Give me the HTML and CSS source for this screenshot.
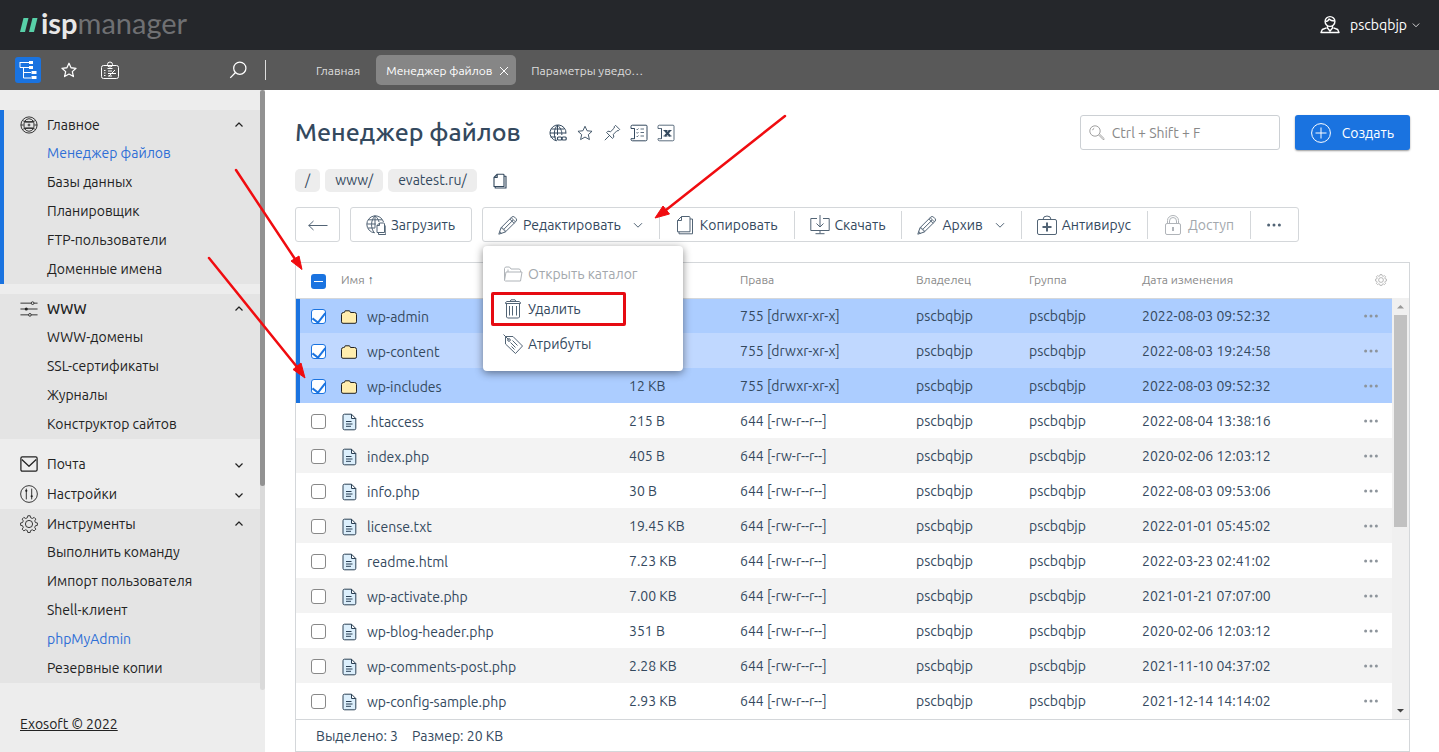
FILE: index.html
```html
<!DOCTYPE html>
<html lang="ru">
<head>
<meta charset="utf-8">
<title>ispmanager</title>
<link rel="stylesheet" href="styles.css">
</head>
<body>
<svg class="sprite" aria-hidden="true">
  <symbol id="star" viewBox="0 0 20 20"><path d="M10 2.500l2.300 5 5.500.6-4.100 3.700 1.200 5.500-4.900-2.800-4.900 2.800 1.200-5.500-4.100-3.700 5.500-.6z"/></symbol>
  <symbol id="lens" viewBox="0 0 20 20"><circle cx="12" cy="8" r="6.800"/><path d="M7.200 12.800L1.400 18.800"/></symbol>
  <symbol id="up" viewBox="0 0 10 10"><path d="M1.500 6.500L5 3 8.500 6.500"/></symbol>
  <symbol id="down" viewBox="0 0 10 10"><path d="M1 3.200L5 7.200 9 3.200"/></symbol>
  <symbol id="down-small" viewBox="0 0 10 10"><path d="M1.500 4.500L5 8 8.500 4.500"/></symbol>
  <symbol id="dots" viewBox="0 0 16 6"><circle cx="2.600" cy="3" r="1.500"/><circle cx="8" cy="3" r="1.500"/><circle cx="13.400" cy="3" r="1.500"/></symbol>
  <symbol id="gear" viewBox="0 0 20 20"><circle cx="10" cy="10" r="4"/><path d="M8.600 1.200h2.800l.5 2.300 2 .9 2.100-1.300 2 2-1.300 2.100.8 1.900 2.300.5v2.800l-2.300.5-.8 1.900 1.300 2.100-2 2-2.100-1.300-2 .9-.5 2.300H8.600l-.5-2.300-2-.9L4 18.900l-2-2 1.300-2.100-.8-1.900-2.300-.5V9.600l2.300-.5.8-1.900L2 5.100l2-2 2.100 1.300 2-.9z" transform="translate(.5 -.3) scale(.95)"/></symbol>
  <symbol id="copy" viewBox="0 0 20 20"><path d="M6.500 1.500H14a1 1 0 0 1 1 1v14.300H2.500V5.500zM6.500 1.500v4h-4M4 16.800v2h13.500V4H15"/></symbol>
  <symbol id="pencil" viewBox="0 0 20 20"><path d="M.8 19.200L3 12.800 13.600 2.200a2.200 2.200 0 0 1 3.100 0l1.200 1.200a2.200 2.200 0 0 1 0 3.100L7.300 17zM3 12.800l1.900.4.300 1.500 1.700.4.400 1.900M11.800 4l4.300 4.300M13.200 2.700l4.200 4.200M6.100 14L15 5.200M1.700 16.500l1.900 1.900"/></symbol>
  <symbol id="folder" viewBox="0 0 18 16"><path d="M1.500 5.500a2 2 0 0 1 2-2h.8l.9-1.700h4.300l1 1.700h4a2 2 0 0 1 2 2v7.300a1.500 1.500 0 0 1-1.500 1.500H3a1.500 1.500 0 0 1-1.500-1.500z"/></symbol>
  <symbol id="file" viewBox="0 0 16 18"><path d="M3.500 1.200h7l4.300 4.300v9.800a1.500 1.500 0 0 1-1.500 1.500H3.500A1.500 1.500 0 0 1 2 15.300V2.700a1.500 1.500 0 0 1 1.500-1.500zM10.500 1.200v4.300h4.300M5 8.500h5.500M5 11h6.500M5 13.300h5"/></symbol>
</svg>

<header class="topbar">
  <a class="logo" href="#"><svg class="logo-mark" viewBox="0 0 18 16"><path d="M3.500 1h5L5 15H0zM12.500 1h5L14 15H9z"/></svg><span class="logo-text"><b>isp</b>manager</span></a>
  <button class="user" type="button">
    <svg class="i20 bold" viewBox="0 0 20 20"><circle cx="10" cy="6.500" r="4.900"/><path d="M5.500 6.500c2 0 3-1 3.500-2.500 1.500 1.500 3.500 2 5.500 2M7.500 11v2l2.500 3 2.500-3v-2M6.500 12.800L2.300 14.500 1 17.500h18l-1.300-3-4.200-1.700"/></svg>
    <span>pscbqbjp</span><svg class="i8"><use href="#down"/></svg>
  </button>
</header>

<nav class="tabbar">
  <div class="tools">
    <button class="tool current" type="button" aria-label="Меню"><svg class="i20" viewBox="0 0 20 20"><path d="M2 2v5.500h9M2 2.500h9M5.500 7.500V18H13M5.500 12.500H13"/><path class="solid" d="M11 1h4v3h-4zM11 6h4v3h-4zM13.500 11h5v3h-5zM13.500 16h5v3h-5z"/></svg></button>
    <button class="tool" type="button" aria-label="Избранное"><svg class="i18 bold"><use href="#star"/></svg></button>
    <button class="tool" type="button" aria-label="Сводка"><svg class="i20" viewBox="0 0 20 20"><rect x="1.500" y="5.500" width="17" height="13" rx="2"/><circle cx="10" cy="4.500" r="2.500"/><path d="M7.500 8.500h5M4 10.500h1.500M4 13h1.500M4 15.500h1.500M8 11h4M8 13.500h8M8 16h4M9 16l6-6"/></svg></button>
    <button class="tool find" type="button" aria-label="Поиск"><svg class="i18 bold"><use href="#lens"/></svg></button>
  </div>
  <div class="tabs">
    <a class="tab" href="#">Главная</a>
    <a class="tab active" href="#">Менеджер файлов <svg class="i10" viewBox="0 0 10 10"><path d="M1 1l8 8M9 1L1 9"/></svg></a>
    <a class="tab" href="#">Параметры уведо…</a>
  </div>
</nav>

<div class="layout">
  <aside class="sidebar">
    <nav class="menu">
      <section class="group open here">
        <button class="group-head" type="button"><svg class="i18" viewBox="0 0 20 20"><circle cx="10" cy="10" r="9"/><path d="M5 6.500a5.500 6 0 0 1 10 0M5 13.500a5.500 6 0 0 0 10 0M1 10h3M16 10h3M3.500 5.500c4 1.200 9 1.200 13 0M3.500 14.500c4-1.200 9-1.200 13 0"/><rect x="4.500" y="6.800" width="11" height="6.500" rx="1"/><path d="M8.500 10h3M10 8.500v3"/></svg><span>Главное</span><svg class="i10"><use href="#up"/></svg></button>
        <a class="chosen" href="#">Менеджер файлов</a><a href="#">Базы данных</a><a href="#">Планировщик</a><a href="#">FTP-пользователи</a><a href="#">Доменные имена</a>
      </section>
      <section class="group open">
        <button class="group-head strong" type="button"><svg class="i18" viewBox="0 0 20 20"><path d="M.5 3.500h12M15.500 3.500h4M.5 10h19M.5 16.500h9M12.500 16.500h7"/><circle cx="14" cy="3.500" r="1.500"/><circle class="solid" cx="7" cy="10" r="1.700"/><circle cx="11" cy="16.500" r="1.500"/></svg><span>WWW</span><svg class="i10"><use href="#up"/></svg></button>
        <a href="#">WWW-домены</a><a href="#">SSL-сертификаты</a><a href="#">Журналы</a><a href="#">Конструктор сайтов</a>
      </section>
      <section class="group">
        <button class="group-head" type="button"><svg class="i18 bold" viewBox="0 0 20 20"><rect x="1" y="2" width="18" height="16" rx="1.500"/><path d="M2 5l8 7.500L18 5"/></svg><span>Почта</span><svg class="i10"><use href="#down-small"/></svg></button>
      </section>
      <section class="group">
        <button class="group-head" type="button"><svg class="i18" viewBox="0 0 20 20"><circle cx="10" cy="10" r="9.300"/><path d="M7 4v12M13 4v12"/><circle class="solid" cx="7" cy="6.500" r="1.200"/><circle class="solid" cx="13" cy="12.500" r="1.200"/></svg><span>Настройки</span><svg class="i10"><use href="#down-small"/></svg></button>
      </section>
      <section class="group open">
        <button class="group-head" type="button"><svg class="i18"><use href="#gear"/></svg><span>Инструменты</span><svg class="i10"><use href="#up"/></svg></button>
        <a href="#">Выполнить команду</a><a href="#">Импорт пользователя</a><a href="#">Shell-клиент</a><a class="chosen" href="#">phpMyAdmin</a><a href="#">Резервные копии</a>
      </section>
    </nav>
    <div class="side-scroll"><span></span></div>
    <a class="copyright" href="#">Exosoft © 2022</a>
  </aside>

  <main class="content">
    <div class="title-row">
      <h1>Менеджер файлов</h1>
      <div class="title-icons">
        <svg class="i18" viewBox="0 0 18 18"><path d="M7.500 16.800A8 8 0 1 1 17 9.500M7.500 16.800C4.500 13 4.500 5 8.500 1 12.500 5 13 8 12.800 11M8.500 1v10M.8 9H17M2.500 5h12.500M1.500 13H7"/><rect class="link" x="8.500" y="13" width="4.200" height="3" rx="1"/><rect class="link" x="13" y="13" width="4.200" height="3" rx="1"/></svg>
        <svg class="i18"><use href="#star"/></svg>
        <svg class="i18" viewBox="0 0 20 20"><path d="M2 18l5.500-5.500M4 9.500l6.500 6.500 1.500-1.500-.5-3 4-4h1.500L18.500 6 14 1.500 12.500 3v1.500l-4 4-3-.5z"/></svg>
        <svg class="i18" viewBox="0 0 18 18"><path d="M4.500 4.500H1V2.500a1.300 1.300 0 0 1 1.300-1.300H16a1 1 0 0 1 1 1v13.300a1.300 1.300 0 0 1-1.300 1.300H2.500A1.500 1.500 0 0 1 1 15.500v-.8h3.500zM4.500 4.500v10.200"/><path class="thin" d="M6.500 5l.8.8L8.500 4.500M6.500 8.500l.8.8L8.500 8M6.500 12l.8.8 1.200-1.300M10.500 5H14M10.500 8.500H14M10.500 12H14"/></svg>
        <svg class="i18" viewBox="0 0 18 18"><path class="thin" d="M4.500 4.500H1V2.500a1.300 1.300 0 0 1 1.300-1.300H16a1 1 0 0 1 1 1v13.300a1.300 1.300 0 0 1-1.300 1.300H2.500A1.500 1.500 0 0 1 1 15.500v-.8h3.500zM4.500 4.500v10.200"/><path class="thick" d="M8 6.500l5 5.500M13 6.500L8 12"/><path d="M6.500 6.500h4M11.500 6.500h3M6.500 12h4M11.500 12h3"/></svg>
      </div>
      <label class="search"><svg class="i16" viewBox="0 0 20 20"><circle cx="7.500" cy="7.500" r="6.500"/><path d="M4.500 6.500a3.500 3.500 0 0 1 2-2.500M12 12.500l6 6 1.200-1.200-6-6"/></svg><input type="search" placeholder="Ctrl + Shift + F" aria-label="Поиск"></label>
      <button class="create" type="button"><svg class="i20" viewBox="0 0 20 20"><circle cx="10" cy="10" r="9.400"/><path d="M10 4.500v11M4.500 10h11"/></svg>Создать</button>
    </div>

    <nav class="crumbs"><a href="#">/</a><a href="#">www/</a><a href="#">evatest.ru/</a><svg class="i16 bold"><use href="#copy"/></svg></nav>

    <div class="toolbar">
      <button class="box back" type="button" aria-label="Назад"><svg class="i20" viewBox="0 0 20 20"><path d="M.5 10.500h19M5.500 6L.8 10.500 5.500 15"/></svg></button>
      <button class="box" type="button"><svg class="i20" viewBox="0 0 20 20"><path d="M8.500 17.800A8.500 8.500 0 1 1 17.500 7M8.500 17.800C4.500 14 4.500 5 9 .8 11.500 3 12.500 5 13 7M9 .8v12M.8 9h9M2.500 4.800h13.500M2 13h7"/><path d="M13.500 8h4a1 1 0 0 1 1 1v8.500h-7.500V10.500zM13.500 8v2.500H11M12.500 17.500v2h7.300V10.500"/></svg>Загрузить</button>
      <div class="box actions">
        <div class="action">
          <button type="button"><svg class="i20"><use href="#pencil"/></svg>Редактировать<svg class="i10 caret"><use href="#down"/></svg></button>
          <div class="dropdown">
            <button type="button" disabled><svg class="i20" viewBox="0 0 20 20"><path d="M1.500 16V4.500l1-1.500h4L8 5h8.500l1 1.500V8M1.500 16.500L3 8h16l-1.500 9H2.500zM5 5.500V8"/></svg>Открыть каталог</button>
            <button class="marked" type="button"><svg class="i20" viewBox="0 0 20 20"><path d="M2.500 4.500h15v-1l-1.500-1H4L2.500 3.500zM7 2.500L8 .8h4l1 1.700M3.500 4.500V18l1 1h11l1-1V4.500M6.500 7v9.500M9.500 7v9.500M13.500 7v9.500"/></svg>Удалить</button>
            <button type="button"><svg class="i20" viewBox="0 0 20 20"><path d="M.5.5l5 5M2.500 2.500h7.500l9.500 9.500-7 7.500L2.500 10zM9.500 6.500l5 5M7.500 8.500l5 5M8.500 12.500l3 3"/><circle cx="6" cy="6" r="1.300"/></svg>Атрибуты</button>
          </div>
        </div>
        <div class="action"><button type="button"><svg class="i20"><use href="#copy"/></svg>Копировать</button></div>
        <div class="action"><button type="button"><svg class="i20" viewBox="0 0 20 20"><path d="M7 3.500H.8v12h18.400v-12H13M10 0v11.500M6.500 8.500l3.500 3.500 3.500-3.500M10 15.500v3M5.500 18.700h9"/></svg>Скачать</button></div>
        <div class="action"><button type="button"><svg class="i20"><use href="#pencil"/></svg>Архив<svg class="i10 caret"><use href="#down"/></svg></button></div>
        <div class="action"><button type="button"><svg class="i20" viewBox="0 0 20 20"><rect x=".5" y="4.500" width="19" height="15" rx="1.500"/><path d="M6 4.500a4 3.500 0 0 1 8 0"/><path class="thick" d="M10 7.500v9M5.500 12h9"/></svg>Антивирус</button></div>
        <div class="action"><button type="button" disabled><svg class="i20" viewBox="0 0 20 20"><rect x="2.500" y="8.500" width="15" height="11" rx="1.500"/><path d="M4.500 8.500V5.500a5.500 5 0 0 1 11 0v3M6.500 8.500V6a3.500 3.500 0 0 1 7 0v2.500"/><path class="thick" d="M10 12v4"/></svg>Доступ</button></div>
        <div class="action"><button type="button" aria-label="Ещё"><svg class="dots"><use href="#dots"/></svg></button></div>
      </div>
    </div>

    <section class="panel">
      <div class="grid">
        <table>
          <colgroup><col class="c-check"><col class="c-icon"><col class="c-name"><col class="c-size"><col class="c-mode"><col class="c-own"><col class="c-own"><col><col class="c-more"></colgroup>
          <thead><tr><th><button class="mixed" type="button" aria-label="Снять выделение"></button></th><th colspan="2">Имя <b>↑</b></th><th></th><th>Права</th><th>Владелец</th><th>Группа</th><th>Дата изменения</th><th><svg class="i12"><use href="#gear"/></svg></th></tr></thead>
          <tbody>
            <tr class="sel"><td><input type="checkbox" checked aria-label="wp-admin"></td><td><svg class="folder"><use href="#folder"/></svg></td><td>wp-admin</td><td></td><td>755 [drwxr-xr-x]</td><td>pscbqbjp</td><td>pscbqbjp</td><td>2022-08-03 09:52:32</td><td><svg class="dots"><use href="#dots"/></svg></td></tr>
            <tr class="sel"><td><input type="checkbox" checked aria-label="wp-content"></td><td><svg class="folder"><use href="#folder"/></svg></td><td>wp-content</td><td></td><td>755 [drwxr-xr-x]</td><td>pscbqbjp</td><td>pscbqbjp</td><td>2022-08-03 19:24:58</td><td><svg class="dots"><use href="#dots"/></svg></td></tr>
            <tr class="sel"><td><input type="checkbox" checked aria-label="wp-includes"></td><td><svg class="folder"><use href="#folder"/></svg></td><td>wp-includes</td><td>12 KB</td><td>755 [drwxr-xr-x]</td><td>pscbqbjp</td><td>pscbqbjp</td><td>2022-08-03 09:52:32</td><td><svg class="dots"><use href="#dots"/></svg></td></tr>
            <tr><td><input type="checkbox" aria-label=".htaccess"></td><td><svg class="file"><use href="#file"/></svg></td><td>.htaccess</td><td>215 B</td><td>644 [-rw-r--r--]</td><td>pscbqbjp</td><td>pscbqbjp</td><td>2022-08-04 13:38:16</td><td><svg class="dots"><use href="#dots"/></svg></td></tr>
            <tr><td><input type="checkbox" aria-label="index.php"></td><td><svg class="file"><use href="#file"/></svg></td><td>index.php</td><td>405 B</td><td>644 [-rw-r--r--]</td><td>pscbqbjp</td><td>pscbqbjp</td><td>2020-02-06 12:03:12</td><td><svg class="dots"><use href="#dots"/></svg></td></tr>
            <tr><td><input type="checkbox" aria-label="info.php"></td><td><svg class="file"><use href="#file"/></svg></td><td>info.php</td><td>30 B</td><td>644 [-rw-r--r--]</td><td>pscbqbjp</td><td>pscbqbjp</td><td>2022-08-03 09:53:06</td><td><svg class="dots"><use href="#dots"/></svg></td></tr>
            <tr><td><input type="checkbox" aria-label="license.txt"></td><td><svg class="file"><use href="#file"/></svg></td><td>license.txt</td><td>19.45 KB</td><td>644 [-rw-r--r--]</td><td>pscbqbjp</td><td>pscbqbjp</td><td>2022-01-01 05:45:02</td><td><svg class="dots"><use href="#dots"/></svg></td></tr>
            <tr><td><input type="checkbox" aria-label="readme.html"></td><td><svg class="file"><use href="#file"/></svg></td><td>readme.html</td><td>7.23 KB</td><td>644 [-rw-r--r--]</td><td>pscbqbjp</td><td>pscbqbjp</td><td>2022-03-23 02:41:02</td><td><svg class="dots"><use href="#dots"/></svg></td></tr>
            <tr><td><input type="checkbox" aria-label="wp-activate.php"></td><td><svg class="file"><use href="#file"/></svg></td><td>wp-activate.php</td><td>7.00 KB</td><td>644 [-rw-r--r--]</td><td>pscbqbjp</td><td>pscbqbjp</td><td>2021-01-21 07:07:00</td><td><svg class="dots"><use href="#dots"/></svg></td></tr>
            <tr><td><input type="checkbox" aria-label="wp-blog-header.php"></td><td><svg class="file"><use href="#file"/></svg></td><td>wp-blog-header.php</td><td>351 B</td><td>644 [-rw-r--r--]</td><td>pscbqbjp</td><td>pscbqbjp</td><td>2020-02-06 12:03:12</td><td><svg class="dots"><use href="#dots"/></svg></td></tr>
            <tr><td><input type="checkbox" aria-label="wp-comments-post.php"></td><td><svg class="file"><use href="#file"/></svg></td><td>wp-comments-post.php</td><td>2.28 KB</td><td>644 [-rw-r--r--]</td><td>pscbqbjp</td><td>pscbqbjp</td><td>2021-11-10 04:37:02</td><td><svg class="dots"><use href="#dots"/></svg></td></tr>
            <tr><td><input type="checkbox" aria-label="wp-config-sample.php"></td><td><svg class="file"><use href="#file"/></svg></td><td>wp-config-sample.php</td><td>2.93 KB</td><td>644 [-rw-r--r--]</td><td>pscbqbjp</td><td>pscbqbjp</td><td>2021-12-14 14:14:02</td><td><svg class="dots"><use href="#dots"/></svg></td></tr>
          </tbody>
        </table>
        <div class="scroll"><svg viewBox="0 0 17 17"><path d="M5 10.500L8.500 7l3.500 3.500z"/></svg><span></span><svg class="end" viewBox="0 0 17 17"><path d="M5 7l3.500 3.500L12 7z"/></svg></div>
      </div>
      <footer class="summary"><span>Выделено: 3</span><span>Размер: 20 KB</span></footer>
    </section>
  </main>
</div>

<svg class="arrows" width="600" height="300" viewBox="200 100 600 300" aria-hidden="true">
  <path class="shaft" d="M785 116L666 210M236 170L295 259M209 258L297 367"/>
  <path class="head" d="M655 218L663 206 669.500 214zM302 269.500L291 261 299 256zM305 378L293 369.500 301 363z"/>
</svg>
</body>
</html>
```
FILE: styles.css
```css
* { box-sizing: border-box; }
body {
  margin: 0;
  min-height: 100vh;
  display: flex;
  flex-direction: column;
  font: 14px/20px Ubuntu, "Noto Sans", sans-serif;
  color: #34495e;
  background: #fff;
}
a { color: inherit; text-decoration: none; }
button { font: inherit; color: inherit; background: none; border: 0; padding: 0; display: flex; align-items: center; white-space: nowrap; }
svg { flex: none; display: block; fill: none; stroke: currentColor; stroke-width: 1; stroke-linejoin: round; }
.sprite { position: absolute; width: 0; height: 0; }
.bold { stroke-width: 1.4; }
.thick { stroke-width: 2; }
.thin { stroke-width: .8; }
.link { stroke-width: 1.2; }
.solid { fill: currentColor; stroke: none; }
.i8 { width: 8px; height: 8px; }
.i10 { width: 10px; height: 10px; }
.i12 { width: 12px; height: 12px; }
.i16 { width: 16px; height: 16px; }
.i18 { width: 18px; height: 18px; }
.i20 { width: 20px; height: 20px; }
.dots { width: 16px; height: 6px; fill: currentColor; stroke: none; }

.topbar { height: 50px; padding: 0 19px 0 20px; display: flex; align-items: center; justify-content: space-between; background: #25272b; color: #fff; }
.logo { display: flex; align-items: center; gap: 3px; padding-bottom: 4px; font: 29px/34px Lato, sans-serif; color: #6f7073; }
.logo b { color: #e8e8e8; }
.logo-mark { width: 18px; height: 16px; margin-top: 3px; fill: #58d0a8; stroke: none; }
.user { gap: 10px; }
.user .i8 { margin-left: -5px; }

.tabbar { height: 40px; display: flex; align-items: center; background: #595959; color: #fff; }
.tools { width: 266px; height: 20px; padding: 0 18px 0 15px; display: flex; align-items: center; gap: 14px; border-right: 1px solid #ddd; }
.tool { width: 26px; height: 26px; justify-content: center; }
.tool.current { background: #1a73e0; border-radius: 3px; }
.tool + .tool { margin-left: 1px; }
.tool.find { margin-left: auto; width: 18px; }
.tabs { display: flex; padding-left: 40px; font-size: 12px; }
.tab { height: 30px; padding: 2px 10px 0; display: flex; align-items: center; color: #ddd; }
.tab.active { margin: 0 5px 0 6px; gap: 7px; padding-right: 7px; background: #868686; color: #fff; border-radius: 5px; }

.layout { flex: 1; display: flex; }
.sidebar { width: 265px; flex: none; display: grid; grid-template: 600px 1fr / 1fr 5px; background: #ededed; color: #222; }
.menu { padding-top: 20px; }
.group a { display: block; padding-left: 47px; line-height: 29px; }
.group a.chosen { color: #2f6fd6; }
.group-head { width: 100%; height: 30px; padding: 0 16px 0 20px; gap: 9px; }
.group-head span { flex: 1; text-align: left; }
.group-head .i10 { stroke-width: 1.2; }
.open { background: #e4e4e4; margin-bottom: 10px; }
.open .group-head { height: 29px; }
.open .strong { font-weight: 500; }
.here { background: linear-gradient(#1a73e0, #1a73e0) 0 0 / 4px 100% no-repeat #e4e4e4; }
.side-scroll { background: #dadada; border-radius: 0 0 3px 3px; }
.side-scroll span { display: block; height: 66%; background: #929292; border-radius: 3px; }
.copyright { grid-column: 1 / 3; justify-self: start; margin: 24px 0 0 20px; text-decoration: underline; }

.content { flex: 1; min-width: 0; padding: 25px 29px 0 30px; display: flex; flex-direction: column; }
.title-row { display: flex; align-items: center; height: 35px; }
h1 { margin: 0; font-size: 25px; line-height: 35px; font-weight: 500; }
.title-icons { display: flex; gap: 9px; margin: 0 auto 0 28px; }
.search { width: 200px; height: 35px; padding: 0 8px; display: flex; align-items: center; gap: 7px; border: 1px solid #ccd0d4; border-radius: 3px; color: #888; }
.search input { flex: 1; min-width: 0; border: 0; outline: 0; padding: 0; font: inherit; background: none; }
.search input::placeholder { color: #888; }
.create { height: 35px; margin-left: 15px; padding: 0 16px; gap: 11px; background: #1a73e0; color: #fff; border-radius: 3px; box-shadow: 0 1px 2px #0006; }

.crumbs { display: flex; align-items: center; gap: 5px; margin-top: 19px; }
.crumbs a { padding: 0 10px; line-height: 23px; background: #ededed; border-radius: 5px; }
.crumbs svg { margin-left: 10px; }

.toolbar { display: flex; gap: 10px; margin-top: 15px; }
.box { height: 35px; border: 1px solid #d4d7da; border-radius: 3px; }
button.box { padding: 0 16px 0 15px; gap: 5px; }
button.back { padding: 0 11px 0 12px; }
.toolbar svg { opacity: .85; }
.actions { display: flex; align-items: center; }
.action { position: relative; }
.action + .action { border-left: 1px solid #d4d7da; }
.action > button { height: 28px; padding: 0 16px 0 15px; gap: 5px; }
.action .caret { margin-left: 7px; }
button:disabled { color: #a3a8ad; }
.dropdown { position: absolute; z-index: 2; top: 35px; left: 0; width: 200px; padding: 11px 0 9px; background: #fff; border-radius: 4px; box-shadow: 0 2px 8px #0007; }
.dropdown button { position: relative; width: 100%; height: 35px; padding: 0 20px; gap: 5px; }
.marked::after { content: ""; position: absolute; inset: 0 57px 1px 8px; border: 3px solid #e60b12; border-radius: 2px; }

.panel { flex: 1; display: flex; flex-direction: column; margin-top: 20px; border: 1px solid #d4d7da; }
.grid { position: relative; flex: 1; }
table { width: 100%; table-layout: fixed; border-collapse: collapse; }
th, td { padding: 0; height: 35px; text-align: left; font-weight: 400; white-space: nowrap; }
th { color: #8a8a8a; font-size: 12px; border-bottom: 1px solid #d4d7da; }
th b { color: #34495e; font-weight: 400; }
th:first-child, td:nth-child(-n+3) { padding-top: 2px; }
.c-check { width: 45px; }
.c-icon { width: 26px; }
.c-name { width: 262px; }
.c-size { width: 111px; }
.c-mode { width: 176px; }
.c-own { width: 113px; }
.c-more { width: 46px; }
tbody tr:nth-child(odd) { background: #f3f3f3; }
tbody tr:nth-child(even) { background: #fff; }
tbody tr.sel:nth-child(odd) { background: #accdff; }
tbody tr.sel:nth-child(even) { background: #c0d8ff; }
.sel td:first-child { box-shadow: inset 4px 0 #1a73e0; }
th:first-child, td:first-child { padding-left: 15px; }
td:last-child { color: #8d949b; }
th .i12 { margin-left: 12px; }
.folder { width: 18px; height: 16px; margin-left: -1px; fill: #ffedae; stroke: #222; }
.file { width: 16px; height: 18px; fill: #dceffc; stroke: #2b4055; }
.mixed { width: 15px; height: 15px; border-radius: 3px; background: linear-gradient(#fff, #fff) 50% 50% / 9px 1px no-repeat #1a73e0; }
input[type="checkbox"] { appearance: none; display: block; width: 15px; height: 15px; margin: 0; border: 1px solid #888; border-radius: 3px; background: #fff; }
input[type="checkbox"]:checked { display: flex; justify-content: center; align-items: start; border-color: #1a73e0; }
input[type="checkbox"]:checked::after { content: ""; flex: none; width: 6px; height: 11px; border: solid #1a73e0; border-width: 0 2px 2px 0; transform: rotate(38deg); }

.scroll { position: absolute; top: 35px; right: 0; bottom: 0; width: 17px; display: flex; flex-direction: column; background: #f0f0f0; }
.scroll span { width: 13px; margin: 0 2px; height: 212px; background: #c1c1c1; }
.scroll svg { width: 17px; height: 17px; fill: #999; stroke: none; }
.scroll .end { margin-top: auto; fill: #444; }
.summary { height: 32px; padding: 0 20px; display: flex; align-items: center; gap: 14px; border-top: 1px solid #d4d7da; }

.arrows { position: absolute; z-index: 3; left: 200px; top: 100px; pointer-events: none; }
.shaft { stroke: #f00c10; stroke-width: 2.500; stroke-linecap: round; }
.head { fill: #f00c10; stroke: #f00c10; }
```
